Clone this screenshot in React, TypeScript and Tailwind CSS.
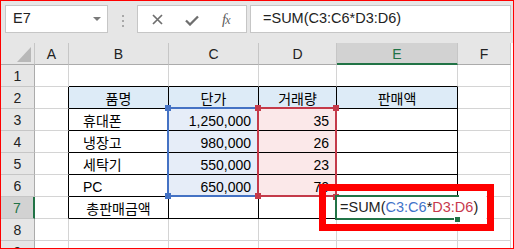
import clsx from 'clsx';

const FONT = "font-['Liberation_Sans','Noto_Sans_CJK_KR',sans-serif]";

const COLS = ['A', 'B', 'C', 'D', 'E', 'F'];

const DATA: Record<number, string[]> = {
  2: ['품명', '단가', '거래량', '판매액'],
  3: ['휴대폰', '1,250,000', '35', ''],
  4: ['냉장고', '980,000', '26', ''],
  5: ['세탁기', '550,000', '23', ''],
  6: ['PC', '650,000', '70', ''],
  7: ['총판매금액', '', '', ''],
};

const Formula = () => (
  <>
    <span>=SUM(</span>
    <span className="text-[#3f73c9]">C3:C6</span>
    <span>*</span>
    <span className="text-[#c8384c]">D3:D6</span>
    <span>)</span>
  </>
);

// c: 1 = A ... 6 = F
const cellClass = (r: number, c: number) => {
  const inTable = r >= 2 && r <= 7;
  const right = inTable && c <= 5 ? 'border-r-black' : 'border-r-[#d4d4d4]';
  const bottom = r <= 7 && c >= 2 && c <= 5 ? 'border-b-black' : 'border-b-[#d4d4d4]';

  let bg = 'bg-white';
  if (r === 2 && c >= 2 && c <= 5) bg = 'bg-[#ddebf7]';
  else if (r >= 3 && r <= 6 && c === 3) bg = 'bg-[#e6edf8]';
  else if (r >= 3 && r <= 6 && c === 4) bg = 'bg-[#fbe8e9]';

  let align = 'justify-end pr-[7px]';
  if (r === 2 || r === 7) align = 'justify-center';
  else if (c === 2) align = 'justify-start pl-[14px]';

  return clsx('flex border-r border-b leading-[21px] pt-[2px] whitespace-nowrap text-[14px] text-black', right, bottom, bg, align);
};

const FormulaBar = () => (
  <div className="h-[42px] bg-[#e6e6e6] flex items-start pt-[4px] pl-[4px]">
    {/* Name box */}
    <div className="w-[103px] h-[28px] bg-white border border-[#c6c6c6] flex items-center justify-between pl-[7px] pr-[6px]">
      <span className="text-[14.5px] text-[#222]">E7</span>
      <svg width="8" height="4" viewBox="0 0 8 4">
        <path d="M0 0h8L4 4z" fill="#7a7a7a" />
      </svg>
    </div>

    {/* Grip dots */}
    <div className="w-[29px] h-[28px] flex flex-col items-center justify-center gap-[3px] pt-[3px]">
      <span className="w-[2px] h-[2px] bg-[#a8a8a8]" />
      <span className="w-[2px] h-[2px] bg-[#a8a8a8]" />
      <span className="w-[2px] h-[2px] bg-[#a8a8a8]" />
    </div>

    {/* Cancel / enter / fx */}
    <div className="w-[110px] h-[28px] bg-white border border-[#c6c6c6] flex items-center pl-[14px]">
      <svg width="11" height="11" viewBox="0 0 11 11" className="mt-[1px]">
        <path d="M1 1l9 9M10 1l-9 9" stroke="#6e6e6e" strokeWidth="1.7" />
      </svg>
      <svg width="14" height="11" viewBox="0 0 14 11" className="ml-[22px] mt-[2px]">
        <path d="M1 5.5l4 4L13 1.5" stroke="#6e6e6e" strokeWidth="2.3" fill="none" />
      </svg>
      <span className="ml-[23px] font-['Liberation_Serif',serif] italic text-[15px] text-[#5e5e5e] leading-none tracking-[-1px]">
        f<span className="text-[12px]">x</span>
      </span>
    </div>

    {/* Formula input */}
    <div className="ml-[3px] w-[261px] h-[28px] bg-white border border-[#c6c6c6] flex items-center pl-[12px] text-[14.5px] text-[#222] whitespace-nowrap">
      =SUM(C3:C6*D3:D6)
    </div>
  </div>
);

const Sheet = () => {
  const rows = [1, 2, 3, 4, 5, 6, 7, 8, 9];

  return (
    <div className="relative grid grid-cols-[34px_34px_100px_90px_78px_121px_53px] auto-rows-[22px]">
      {/* Corner */}
      <div className="bg-[#e6e6e6] border-r border-b border-r-[#c6c6c6] border-b-[#ababab] flex items-end justify-end pr-[3px] pb-[2px]">
        <svg width="14" height="15" viewBox="0 0 14 15">
          <path d="M14 0V15H0z" fill="#b8b8b8" />
        </svg>
      </div>

      {/* Column headers */}
      {COLS.map((l) =>
        l === 'E' ? (
          <div
            key={l}
            className="bg-[#d2d2d2] border-r border-r-[#c6c6c6] border-b-2 border-b-[#217346] flex justify-center leading-[21px] pt-[1px] text-[14px] text-[#217346]"
          >
            {l}
          </div>
        ) : (
          <div
            key={l}
            className="bg-[#e6e6e6] border-r border-b border-r-[#c6c6c6] border-b-[#ababab] flex justify-center leading-[21px] pt-[1px] text-[14px] text-[#222]"
          >
            {l}
          </div>
        )
      )}

      {rows.map((r) => (
        <div key={r} className="contents">
          {r === 7 ? (
            <div className="bg-[#d2d2d2] border-b border-b-[#c6c6c6] border-r-2 border-r-[#217346] flex justify-center leading-[21px] pt-[1px] text-[14px] text-[#217346]">
              {r}
            </div>
          ) : (
            <div className="bg-[#e6e6e6] border-b border-r border-b-[#c6c6c6] border-r-[#ababab] flex justify-center leading-[21px] pt-[1px] text-[14px] text-[#222]">
              {r}
            </div>
          )}
          {COLS.map((_, i) => {
            const c = i + 1;
            const text = c >= 2 && c <= 5 ? DATA[r]?.[c - 2] ?? '' : '';
            return (
              <div key={c} className={cellClass(r, c)}>
                {text}
              </div>
            );
          })}
        </div>
      ))}

      {/* Reference range C3:C6 */}
      <div className="absolute left-[166px] top-[64px] w-[92px] h-[90px] border-2 border-[#4472c4]" />
      <div className="absolute left-[164px] top-[62px] w-[6px] h-[6px] bg-[#4472c4]" />
      <div className="absolute left-[164px] top-[150px] w-[6px] h-[6px] bg-[#4472c4]" />

      {/* Reference range D3:D6 */}
      <div className="absolute left-[256px] top-[64px] w-[80px] h-[90px] border-2 border-[#c43a4a]" />
      <div className="absolute left-[254px] top-[62px] w-[6px] h-[6px] bg-[#c43a4a]" />
      <div className="absolute left-[332px] top-[62px] w-[6px] h-[6px] bg-[#c43a4a]" />
      <div className="absolute left-[254px] top-[150px] w-[6px] h-[6px] bg-[#c43a4a]" />
      <div className="absolute left-[332px] top-[151px] w-[6px] h-[6px] bg-[#c43a4a]" />

      {/* In-cell editor E7 */}
      <div className="absolute left-[334px] top-[152px] w-[151px] h-[25px] bg-white">
        <div className="absolute inset-y-0 left-0 w-[124px] border-l-2 border-y-2 border-[#217346]" />
        <div className="relative pl-[5px] pt-[2px] leading-[21px] text-[14.5px] text-[#222] whitespace-nowrap">
          <Formula />
        </div>
      </div>
      <div className="absolute left-[453px] top-[173px] w-[7px] h-[7px] bg-[#217346] border border-white" />

      {/* Highlight box */}
      <div className="absolute left-[318px] top-[141px] w-[175px] h-[47px] border-[7px] border-[#ff0000]" />
    </div>
  );
};

export default function App() {
  return (
    <div className={clsx('w-[514px] h-[249px] border border-[#ff0000] overflow-hidden bg-white', FONT)}>
      <FormulaBar />
      <Sheet />
    </div>
  );
}
